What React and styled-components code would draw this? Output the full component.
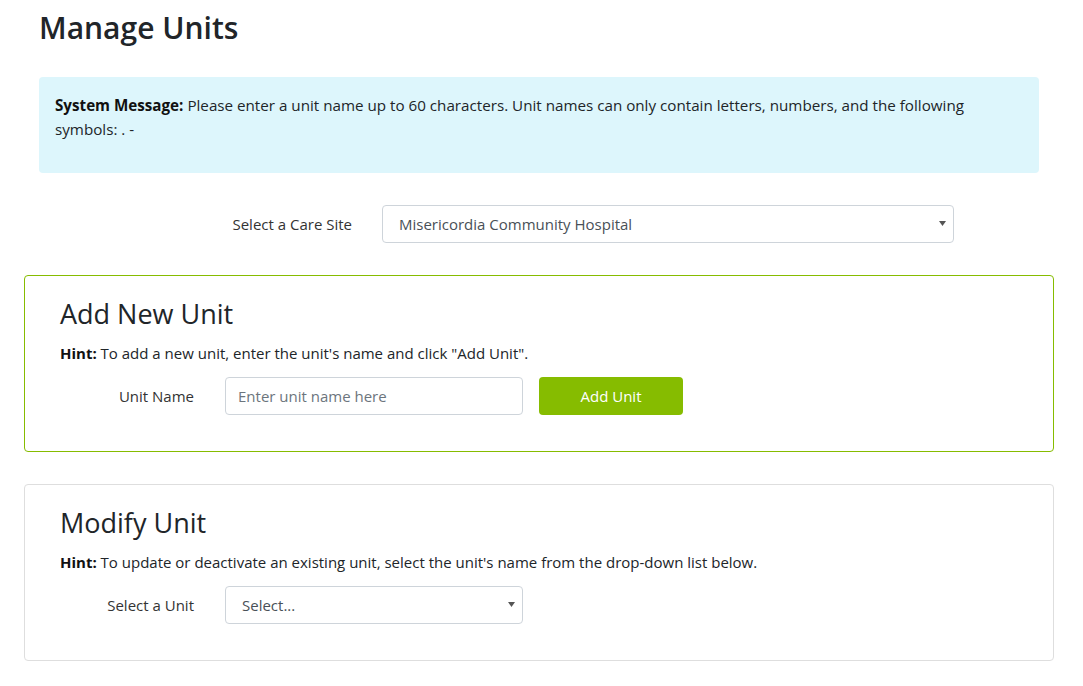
import React from "react";
import styled, { createGlobalStyle } from "styled-components";

const GlobalStyle = createGlobalStyle`
  * { box-sizing: border-box; }
  html, body { margin: 0; padding: 0; background: #fff; }
  body {
    font-family: "Open Sans", "Noto Sans", "Liberation Sans", sans-serif;
    font-size: 15px;
    color: #212529;
  }
`;

const Page = styled.div`
  width: 1030px;
  margin-left: 24px;
  padding: 8px 15px 20px;
  display: flex;
  flex-direction: column;
`;

const Title = styled.h2`
  margin: 0 0 29px;
  font-size: 30px;
  line-height: 40px;
  font-weight: 600;
  color: #212529;
`;

const Alert = styled.div`
  background: #ddf6fc;
  border-radius: 4px;
  padding: 16px 16px 0;
  height: 96px;
`;

const AlertText = styled.p`
  margin: 0;
  max-width: 940px;
  font-size: 15.2px;
  line-height: 24px;
  color: #212529;
`;

const Strong = styled.strong`
  font-weight: 700;
  color: #111;
`;

const SiteRow = styled.div`
  display: grid;
  grid-template-columns: 313px 572px;
  column-gap: 30px;
  align-items: center;
  margin-top: 32px;
`;

const Label = styled.label`
  text-align: right;
  font-size: 15px;
  color: #333;
  line-height: 24px;
`;

const SelectWrap = styled.div`
  position: relative;
  width: 100%;
  height: 38px;
`;

const Select = styled.select`
  display: block;
  appearance: none;
  -webkit-appearance: none;
  width: 100%;
  height: 38px;
  border: 1px solid #ced4da;
  border-radius: 4px;
  background: #fff;
  padding: 0 28px 0 16px;
  font-family: inherit;
  font-size: 15px;
  color: #495057;
  outline: none;
`;

const Caret = styled.svg`
  position: absolute;
  right: 8px;
  top: 16px;
  width: 7px;
  height: 5px;
  pointer-events: none;
`;

const Card = styled.section`
  margin: 32px -15px 0;
  border: 1px solid ${(p) => (p.$accent ? "#86bc00" : "#dedede")};
  border-radius: 4px;
  padding: 21px 35px 36px;
`;

const CardTitle = styled.h3`
  margin: 0 0 10px;
  font-size: 27px;
  line-height: 34px;
  font-weight: 400;
  color: #212529;
`;

const Hint = styled.p`
  margin: 0 0 12px;
  font-size: 15px;
  line-height: 24px;
  color: #212529;
`;

const FormRow = styled.div`
  display: grid;
  grid-template-columns: 134px 298px 144px;
  column-gap: 31px;
  align-items: center;
  & > :nth-child(3) { margin-left: -15px; }
`;

const TextInput = styled.input`
  display: block;
  width: 100%;
  height: 38px;
  border: 1px solid #ced4da;
  border-radius: 4px;
  padding: 0 12px;
  font-family: inherit;
  font-size: 15px;
  color: #495057;
  outline: none;
  &::placeholder { color: #6c757d; opacity: 1; }
`;

const Button = styled.button`
  width: 144px;
  height: 38px;
  border: none;
  border-radius: 4px;
  background: #86bc00;
  color: #fff;
  font-family: inherit;
  font-size: 15px;
  cursor: pointer;
`;

function Dropdown({ children }) {
  return (
    <SelectWrap>
      <Select defaultValue={0}>{children}</Select>
      <Caret viewBox="0 0 7 5">
        <path d="M0 0 L7 0 L3.5 5 Z" fill="#555" />
      </Caret>
    </SelectWrap>
  );
}

export default function App() {
  return (
    <>
      <GlobalStyle />
      <Page>
        <Title>Manage Units</Title>
        <Alert>
          <AlertText>
            <Strong>System Message:</Strong> Please enter a unit name up to 60 characters. Unit names can only contain letters, numbers, and the following symbols: . -
          </AlertText>
        </Alert>
        <SiteRow>
          <Label>Select a Care Site</Label>
          <Dropdown>
            <option value={0}>Misericordia Community Hospital</option>
          </Dropdown>
        </SiteRow>
        <Card $accent>
          <CardTitle>Add New Unit</CardTitle>
          <Hint>
            <Strong>Hint:</Strong> To add a new unit, enter the unit's name and click "Add Unit".
          </Hint>
          <FormRow>
            <Label>Unit Name</Label>
            <TextInput placeholder="Enter unit name here" />
            <Button>Add Unit</Button>
          </FormRow>
        </Card>
        <Card>
          <CardTitle>Modify Unit</CardTitle>
          <Hint>
            <Strong>Hint:</Strong> To update or deactivate an existing unit, select the unit's name from the drop-down list below.
          </Hint>
          <FormRow>
            <Label>Select a Unit</Label>
            <Dropdown>
              <option value={0}>Select...</option>
            </Dropdown>
          </FormRow>
        </Card>
      </Page>
    </>
  );
}
